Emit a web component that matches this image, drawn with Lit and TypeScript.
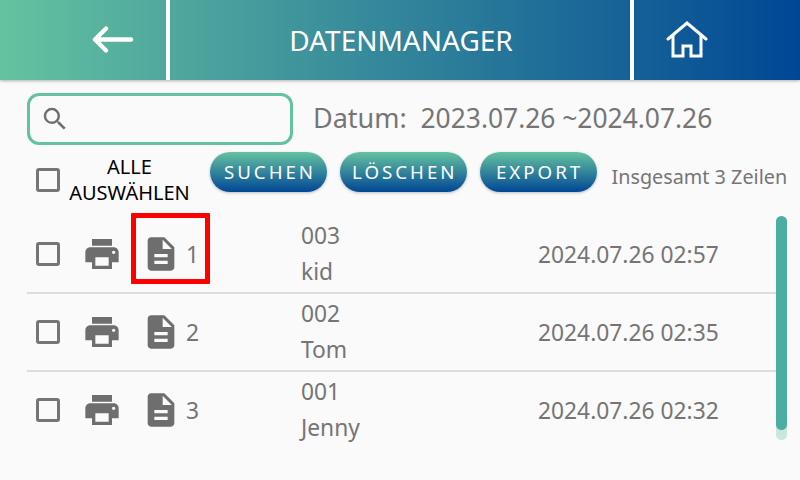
import { LitElement, html, css } from "lit";
import { customElement } from "lit/decorators.js";

const rows = [
  { n: 1, id: "003", name: "kid", t: "2024.07.26 02:57" },
  { n: 2, id: "002", name: "Tom", t: "2024.07.26 02:35" },
  { n: 3, id: "001", name: "Jenny", t: "2024.07.26 02:32" },
];

@customElement("app-root")
export class AppRoot extends LitElement {
  static styles = css`
    :host { display: block; width: 800px; height: 480px; background: #fafafa; font-family: "Noto Sans", sans-serif; overflow: hidden; position: relative; }
    .header { height: 80px; display: grid; grid-template-columns: 166px 4px 460px 4px 1fr; background: linear-gradient(90deg, #65c2a0, #004795); box-shadow: 0 1px 3px rgba(0,0,0,.3); color: #fff; }
    .sep { background: #fff; }
    .back { display: flex; align-items: center; padding-left: 92px; }
    .title { display: flex; align-items: center; justify-content: center; padding-left: 2px; font-size: 28px; line-height: 80px; }
    .home { display: flex; align-items: center; padding-left: 32px; }
    .search-row { display: flex; align-items: center; padding: 13px 0 0 27px; height: 52px; }
    .search { width: 266px; height: 52px; box-sizing: border-box; border: 3px solid #65c2a0; border-radius: 12px; display: flex; align-items: center; padding-left: 10px; }
    .date { margin-left: 20px; font-size: 26.4px; line-height: 36px; color: #757575; white-space: pre; margin-top: -2px; }
    .date-label { font-size: 27px; }
    .tools { display: flex; align-items: flex-start; height: 71px; padding-left: 36px; }
    .cb { width: 24px; height: 24px; border: 3px solid #757575; border-radius: 3px; box-sizing: border-box; flex: none; }
    .tools .cb { margin-top: 23px; }
    .all { width: 130px; margin: 9px 0 0 4.5px; text-align: center; font-size: 20px; line-height: 26px; color: #000; }
    .actions { display: flex; gap: 13px; margin: 7px 0 0 15.5px; }
    .btn { height: 40px; min-width: 117px; box-sizing: border-box; padding: 0 10px 0 13px; text-align: center; border-radius: 20px; background: linear-gradient(180deg, #65c2a0, #004795); box-shadow: 0 1px 3px rgba(0,0,0,.25); color: #fff; font-size: 18.7px; letter-spacing: 3px; line-height: 40px; }
    .btn.wide { padding: 0 9px 0 12px; }
    .count { font-size: 19.8px; line-height: 27px; color: #757575; margin: 18px 0 0 15px; white-space: nowrap; }
    .list { margin: 0 24px 0 27px; }
    .row { height: 78px; box-sizing: border-box; display: flex; align-items: center; padding-left: 9px; border-bottom: 2px solid #ddd; color: #757575; font-size: 22.8px; }
    .row:last-child { border-bottom-color: transparent; }
    .print { margin-left: 22px; width: 40px; height: 40px; flex: none; }
    .doc { margin-left: 19px; width: 40px; height: 40px; flex: none; }
    .num { width: 115px; margin-left: 5px; flex: none; }
    .who { width: 237px; flex: none; line-height: 36px; }
    .mark { position: absolute; left: 131px; top: 213px; width: 79px; height: 71px; box-sizing: border-box; border: 5px solid #f00; border-radius: 1px; }
    .thumb { position: absolute; left: 776px; top: 216px; width: 11px; height: 224px; border-radius: 6px; background: #c8e7df; }
    .thumb::before { content: ""; display: block; width: 11px; height: 214px; border-radius: 6px; background: #4caea3; }
  `;

  render() {
    return html`
      <div class="header">
        <div class="back">
          <svg width="42" height="28" viewBox="0 0 42 28" fill="none" stroke="#fff" stroke-width="4.4" stroke-linecap="round" stroke-linejoin="round"><path d="M3 13.5H39M14 2.5L3 13.5L14 24.5"/></svg>
        </div>
        <div class="sep"></div>
        <div class="title">DATENMANAGER</div>
        <div class="sep"></div>
        <div class="home">
          <svg width="42" height="38" viewBox="0 0 42 38" fill="none" stroke="#fff" stroke-width="3" stroke-linecap="round" stroke-linejoin="miter"><path d="M2 18L21 2L40 18"/><path d="M7 14V35H17V25H25V35H35V14" stroke-linecap="butt"/></svg>
        </div>
      </div>
      <div class="search-row">
        <div class="search">
          <svg width="30" height="30" viewBox="0 0 24 24" fill="#6e6e6e"><path d="M15.5 14h-.79l-.28-.27A6.47 6.47 0 0 0 16 9.5 6.5 6.5 0 1 0 9.5 16c1.61 0 3.09-.59 4.23-1.57l.27.28v.79l5 4.99L20.49 19l-4.99-5zm-6 0C7.01 14 5 11.99 5 9.5S7.01 5 9.5 5 14 7.01 14 9.5 11.99 14 9.5 14z"/></svg>
        </div>
        <div class="date"><span class="date-label">Datum:</span>  2023.07.26 ~2024.07.26</div>
      </div>
      <div class="tools">
        <div class="cb"></div>
        <div class="all">ALLE<br />AUSWÄHLEN</div>
        <div class="actions">
          <div class="btn">SUCHEN</div>
          <div class="btn wide">LÖSCHEN</div>
          <div class="btn">EXPORT</div>
        </div>
        <div class="count">Insgesamt 3 Zeilen</div>
      </div>
      <div class="list">
        ${rows.map(
          (r) => html`<div class="row">
            <div class="cb"></div>
            <svg class="print" viewBox="0 0 24 24" fill="#6e6e6e"><path d="M19 8H5c-1.66 0-3 1.34-3 3v6h4v4h12v-4h4v-6c0-1.66-1.34-3-3-3zm-3 11H8v-5h8v5zm3-7c-.55 0-1-.45-1-1s.45-1 1-1 1 .45 1 1-.45 1-1 1zm-1-9H6v4h12V3z"/></svg>
            <svg class="doc" viewBox="0 0 24 24" fill="#6e6e6e"><path d="M14 2H6c-1.1 0-2 .9-2 2v16c0 1.1.9 2 2 2h12c1.1 0 2-.9 2-2V8l-6-6zm2 16H8v-2h8v2zm0-4H8v-2h8v2zm-3-5V3.5L18.5 9H13z"/></svg>
            <div class="num">${r.n}</div>
            <div class="who">${r.id}<br />${r.name}</div>
            <div>${r.t}</div>
          </div>`
        )}
      </div>
      <div class="mark"></div>
      <div class="thumb"></div>
    `;
  }
}
